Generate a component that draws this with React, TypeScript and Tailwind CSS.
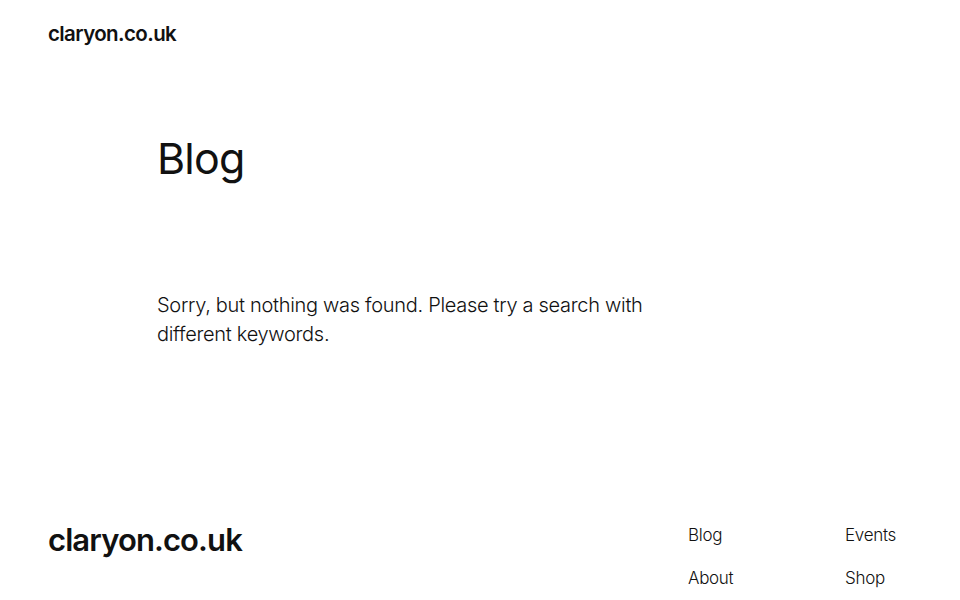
export default function App() {
  return (
    <div
      className="min-h-[600px] w-full bg-white text-[#111111] overflow-hidden"
      style={{ fontFamily: 'Inter, "Noto Sans", sans-serif' }}
    >
      {/* Header */}
      <header className="px-12 pt-[22px] h-[88px]">
        <a className="text-[20.5px] font-semibold tracking-[-0.6px] leading-[24px]">claryon.co.uk</a>
      </header>

      {/* Main */}
      <main className="pl-[157px] pr-12">
        <h1 className="mt-[45px] text-[43px] font-normal tracking-[-0.8px] leading-[1.2]">Blog</h1>
        <p className="mt-[106px] max-w-[520px] text-[20px] tracking-[-0.3px] leading-[29px] font-light">
          Sorry, but nothing was found. Please try a search with different keywords.
        </p>
      </main>

      {/* Footer */}
      <footer className="mt-[169px] px-12 flex justify-between items-start">
        <div className="text-[31px] font-semibold tracking-[-0.9px] leading-[36px] pt-[4px]">claryon.co.uk</div>
        <nav className="flex pt-[4px]">
          <div className="w-[157px] flex flex-col gap-[17px] text-[17px] font-light tracking-[-0.3px] leading-[26px]">
            <a>Blog</a>
            <a>About</a>
          </div>
          <div className="w-[67px] flex flex-col gap-[17px] text-[17px] font-light tracking-[-0.3px] leading-[26px]">
            <a>Events</a>
            <a>Shop</a>
          </div>
        </nav>
      </footer>
    </div>
  );
}
